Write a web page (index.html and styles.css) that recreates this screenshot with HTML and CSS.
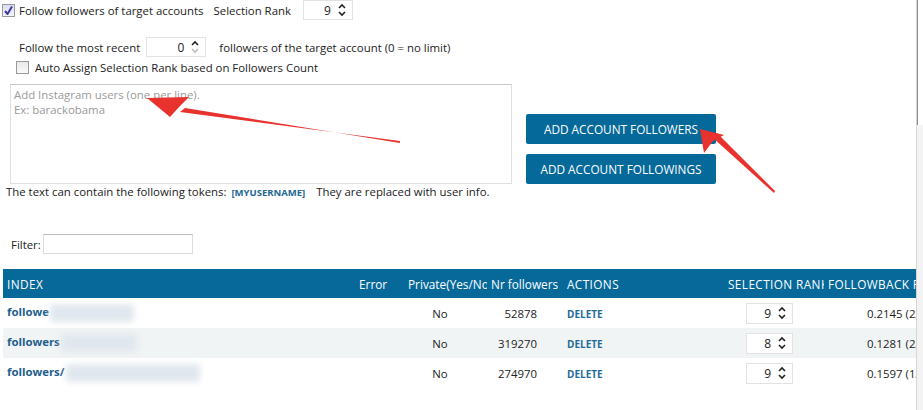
FILE: index.html
```html
<!DOCTYPE html>
<html>
<head>
  <meta charset="UTF-8">
  <title>Follow followers</title>
  <link rel="stylesheet" href="styles.css">
</head>
<body>
  <div class="frame">
    <div class="main">
      <div class="top-row">
        <span class="check checked">
          <svg width="9" height="9" viewBox="0 0 9 9"><path d="M1 5 L3.5 8 L8 0.5" fill="none" stroke="#3a3aa8" stroke-width="2"/></svg>
        </span>
        <span class="follow-label">Follow followers of target accounts</span>
        <span class="rank-label">Selection Rank</span>
        <span class="spinner top-spinner"><span class="val">9</span><span class="arrows"><svg width="8" height="14" viewBox="0 0 8 14"><path d="M1 5 L4 2 L7 5 M1 9 L4 12 L7 9" fill="none" stroke="#222" stroke-width="1.6"/></svg></span></span>
      </div>

      <div class="recent-row">
        <span>Follow the most recent</span>
        <span class="spinner recent-spinner"><span class="val">0</span><span class="arrows"><svg width="8" height="14" viewBox="0 0 8 14"><path d="M1 5 L4 2 L7 5" fill="none" stroke="#222" stroke-width="1.6"/><path d="M1 9 L4 12 L7 9" fill="none" stroke="#bbb" stroke-width="1.6"/></svg></span></span>
        <span class="recent-tail">followers of the target account (0 = no limit)</span>
      </div>

      <div class="auto-row">
        <span class="check"></span>
        <span>Auto Assign Selection Rank based on Followers Count</span>
      </div>

      <div class="compose">
        <div class="compose-left">
          <textarea class="users" placeholder="Add Instagram users (one per line).&#10;Ex: barackobama"></textarea>
          <div class="tokens">The text can contain the following tokens: <b class="token">[MYUSERNAME]</b> They are replaced with user info.</div>
        </div>
        <div class="compose-buttons">
          <button class="btn">ADD ACCOUNT FOLLOWERS</button>
          <button class="btn">ADD ACCOUNT FOLLOWINGS</button>
        </div>
      </div>

      <div class="filter-row">
        <label>Filter:</label>
        <input type="text" class="filter-input">
      </div>

      <table class="grid">
        <colgroup>
          <col style="width:352px"><col style="width:48px"><col style="width:84px"><col style="width:76px"><col style="width:160px"><col style="width:101px"><col style="width:92px">
        </colgroup>
        <thead>
          <tr>
            <th class="caps">INDEX</th><th>Error</th><th class="c-priv">Private(Yes/No)</th><th>Nr followers</th><th class="caps">ACTIONS</th><th class="c-rank caps">SELECTION RANK</th><th class="caps">FOLLOWBACK RATIO</th>
          </tr>
        </thead>
        <tbody>
          <tr>
            <td class="name">followe<span class="blur" style="width:84px"></span></td>
            <td></td><td class="priv">No</td><td class="num">52878</td><td><a class="del">DELETE</a></td>
            <td><span class="spinner row-spinner"><span class="val">9</span><span class="arrows"><svg width="8" height="14" viewBox="0 0 8 14"><path d="M1 5 L4 2 L7 5 M1 9 L4 12 L7 9" fill="none" stroke="#222" stroke-width="1.6"/></svg></span></span></td>
            <td class="ratio">0.2145 (2/15)</td>
          </tr>
          <tr class="alt">
            <td class="name">followers<span class="blur" style="width:76px"></span></td>
            <td></td><td class="priv">No</td><td class="num">319270</td><td><a class="del">DELETE</a></td>
            <td><span class="spinner row-spinner"><span class="val">8</span><span class="arrows"><svg width="8" height="14" viewBox="0 0 8 14"><path d="M1 5 L4 2 L7 5 M1 9 L4 12 L7 9" fill="none" stroke="#222" stroke-width="1.6"/></svg></span></span></td>
            <td class="ratio">0.1281 (2/16)</td>
          </tr>
          <tr>
            <td class="name">followers/<span class="blur" style="width:134px"></span></td>
            <td></td><td class="priv">No</td><td class="num">274970</td><td><a class="del">DELETE</a></td>
            <td><span class="spinner row-spinner"><span class="val">9</span><span class="arrows"><svg width="8" height="14" viewBox="0 0 8 14"><path d="M1 5 L4 2 L7 5 M1 9 L4 12 L7 9" fill="none" stroke="#222" stroke-width="1.6"/></svg></span></span></td>
            <td class="ratio">0.1597 (1/6)</td>
          </tr>
        </tbody>
      </table>

      <!-- annotation arrows drawn over the screenshot -->
      <svg class="marks" width="916" height="410" viewBox="0 0 916 410">
        <polygon points="400,141 400,143 185,108 180,112" fill="#e8322e"/>
        <polygon points="147,98 189,97 180,106 170,117" fill="#e8322e"/>
        <polygon points="775,191 774,193 712,137 717,133" fill="#e8322e"/>
        <polygon points="700,129 724,135 713,141 704,153" fill="#e8322e"/>
      </svg>
    </div>
    <div class="scrollbar"><div class="thumb"></div></div>
  </div>
</body>
</html>
```

FILE: styles.css
```css
body {
  margin: 0;
  font-family: "Open Sans", "Liberation Sans", sans-serif;
  font-size: 11.4px;
  color: #222;
  background: #fff;
}
.frame {
  display: flex;
  height: 410px;
  overflow: hidden;
}
.main {
  position: relative;
  width: 916px;
  flex: none;
}
.scrollbar {
  flex: 1;
  border-left: 1px solid #d6d6d6;
  background: #f3f3f3;
}
.thumb {
  height: 125px;
  border-left: 1px solid #8a8a8a;
  background: #fff;
}

.check {
  display: inline-flex;
  align-items: center;
  justify-content: center;
  width: 11px;
  height: 11px;
  border: 1px solid #9a9a9a;
  background: linear-gradient(#e9e9e9, #fafafa);
  flex: none;
}
.check.checked {
  background: linear-gradient(#dcdcf0, #f4f4fb);
}

.spinner {
  display: inline-flex;
  align-items: center;
  justify-content: flex-end;
  border: 1px solid #e2e2e2;
  box-sizing: border-box;
  background: #fff;
  font-size: 12px;
}
.spinner .val {
  margin-right: 7px;
}
.spinner .arrows {
  display: flex;
  margin-right: 6px;
}

.top-row {
  display: flex;
  align-items: center;
  height: 20px;
  padding-left: 2px;
}
.follow-label {
  margin-left: 4px;
}
.rank-label {
  margin-left: 10px;
}
.top-spinner {
  width: 50px;
  height: 20px;
  margin-left: 12px;
}

.recent-row {
  display: flex;
  align-items: center;
  height: 20px;
  margin-top: 17px;
  padding-left: 19px;
}
.recent-spinner {
  width: 60px;
  height: 20px;
  margin-left: 6px;
}
.recent-tail {
  margin-left: 13px;
}

.auto-row {
  display: flex;
  align-items: center;
  height: 16px;
  margin-top: 2px;
  padding-left: 16px;
}
.auto-row .check {
  margin-right: 6px;
}

.compose {
  display: flex;
  margin-top: 9px;
}
.compose-left {
  width: 520px;
}
.users {
  display: block;
  width: 502px;
  height: 100px;
  margin-left: 10px;
  box-sizing: border-box;
  border: 1px solid #e0e0e0;
  border-top-color: #c8c8c8;
  padding: 2px 3px;
  resize: none;
  font-family: inherit;
  font-size: 11.4px;
  line-height: 15px;
}
.users::placeholder {
  color: #9a9a9a;
}
.tokens {
  margin-top: 1px;
  padding-left: 6px;
  height: 14px;
  line-height: 14px;
}
.token {
  font-size: 9.5px;
  color: #1d6894;
  margin: 0 8px 0 2px;
}
.compose-buttons {
  display: flex;
  flex-direction: column;
  gap: 10px;
  margin-top: 30px;
  margin-left: 6px;
}
.btn {
  width: 190px;
  height: 30px;
  border: none;
  border-radius: 2px;
  background: #05699a;
  color: #fff;
  font-family: inherit;
  font-size: 11.8px;
  padding: 0;
}

.filter-row {
  display: flex;
  align-items: center;
  margin-top: 35px;
  padding-left: 11px;
  height: 20px;
}
.filter-input {
  width: 150px;
  height: 20px;
  box-sizing: border-box;
  margin-left: 2px;
  border: 1px solid #dcdcdc;
  border-top-color: #bdbdbd;
}

.grid {
  margin-top: 15px;
  margin-left: 3px;
  width: 913px;
  table-layout: fixed;
  border-collapse: collapse;
}
.grid th {
  background: #06699a;
  color: #fff;
  font-weight: normal;
  font-size: 11.8px;
  text-align: left;
  height: 29px;
  padding: 0 0 0 4px;
  white-space: nowrap;
  overflow: hidden;
}
.grid th.caps {
  letter-spacing: 0.4px;
}
.grid th.c-priv {
  padding-left: 5px;
}
.grid th.c-rank {
  padding-left: 5px;
}
.grid td {
  height: 30px;
  padding: 0 0 0 4px;
  white-space: nowrap;
  overflow: hidden;
}
.grid tr.alt td {
  background: #f1f4f4;
}
.name {
  font-weight: bold;
  color: #1e5e8c;
}
.blur {
  display: inline-block;
  vertical-align: middle;
  height: 18px;
  margin-left: 1px;
  background: #e1e7ee;
  border-radius: 3px;
  filter: blur(3px);
}
.priv {
  text-align: center;
  padding-right: 14px !important;
}
.num {
  text-align: right;
  padding-right: 26px !important;
}
.del {
  font-size: 10px;
  font-weight: bold;
  color: #1e6c96;
}
.row-spinner {
  width: 47px;
  height: 21px;
  margin-left: 19px;
}
.ratio {
  padding-left: 43px !important;
}

.marks {
  position: absolute;
  left: 0;
  top: 0;
  pointer-events: none;
}
```
